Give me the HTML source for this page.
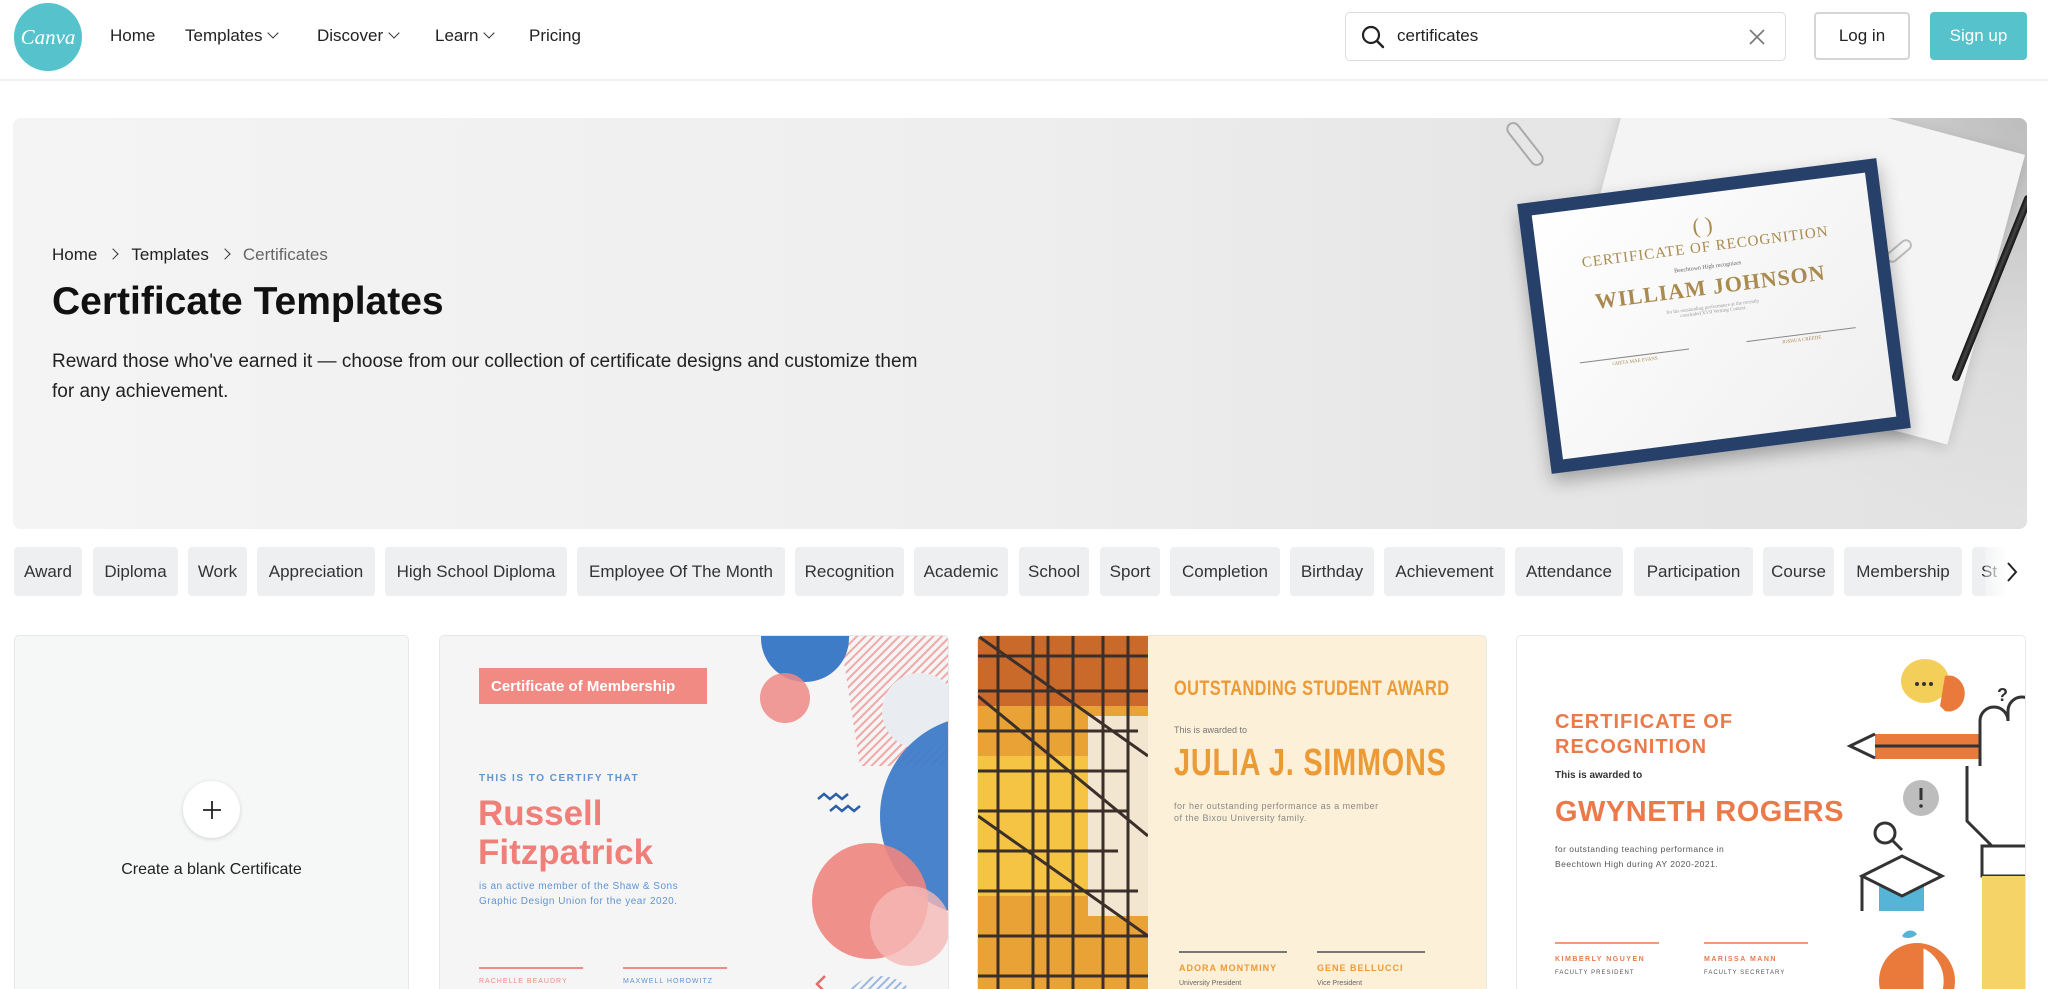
<!DOCTYPE html>
<html><head><meta charset="utf-8">
<style>
*{box-sizing:border-box;margin:0;padding:0}
body{width:2048px;height:989px;overflow:hidden;background:#fff;font-family:"Liberation Sans",sans-serif;color:#1a1a1a;position:relative}
.abs{position:absolute}
.nav a{position:absolute;top:26px;font-size:17px;color:#222;white-space:nowrap}
.chev{display:inline-block;width:8px;height:8px;border-right:1.6px solid #333;border-bottom:1.6px solid #333;transform:rotate(45deg);margin-left:7px;position:relative;top:-4px}
.chip{position:absolute;top:547px;height:49px;background:#eeeff1;border-radius:4px;font-size:17px;color:#333;display:flex;align-items:center;justify-content:center;white-space:nowrap;overflow:hidden}
.card{position:absolute;top:635px;height:354px;border-radius:5px 5px 0 0;overflow:hidden;border:1px solid #e8e8e8;border-bottom:none}
</style></head><body>

<div class="abs" style="left:14px;top:3px;width:68px;height:68px;border-radius:50%;background:#56c2cb;color:#fff;font-family:'Liberation Serif',serif;font-style:italic;font-size:21px;display:flex;align-items:center;justify-content:center">Canva</div>
<div class="nav">
<a style="left:110px">Home</a>
<a style="left:185px">Templates<span class="chev"></span></a>
<a style="left:317px">Discover<span class="chev"></span></a>
<a style="left:435px">Learn<span class="chev"></span></a>
<a style="left:529px">Pricing</a>
</div>
<div class="abs" style="left:1345px;top:12px;width:441px;height:49px;border:1px solid #dcdcdc;border-radius:5px"></div>
<svg class="abs" style="left:1360px;top:24px" width="26" height="26" viewBox="0 0 26 26"><circle cx="11" cy="11" r="8" fill="none" stroke="#222" stroke-width="2.2"/><path d="M17 17l6 6" stroke="#222" stroke-width="2.4" stroke-linecap="round"/></svg>
<div class="abs" style="left:1397px;top:26px;font-size:17px;color:#222">certificates</div>
<svg class="abs" style="left:1748px;top:28px" width="18" height="18" viewBox="0 0 18 18"><path d="M2 2l14 14M16 2L2 16" stroke="#777" stroke-width="1.6"/></svg>
<div class="abs" style="left:1814px;top:12px;width:96px;height:48px;border:2px solid #d6d6d6;border-radius:4px;font-size:17px;display:flex;align-items:center;justify-content:center;color:#222">Log in</div>
<div class="abs" style="left:1930px;top:12px;width:97px;height:48px;background:#56c2cb;border-radius:4px;font-size:17px;display:flex;align-items:center;justify-content:center;color:#fff">Sign up</div>
<div class="abs" style="left:0;top:79px;width:2048px;height:2px;background:#f2f2f2"></div>

<div class="abs" style="left:13px;top:118px;width:2014px;height:411px;border-radius:8px;overflow:hidden;background:linear-gradient(90deg,#f4f4f4 0%,#eeeeee 50%,#e6e6e6 75%,#e2e2e2 100%)">
  <div class="abs" style="right:0;top:0;width:420px;height:411px;background:radial-gradient(ellipse at 100% 0%,#bdbdbd 0%,rgba(210,210,210,0.4) 40%,rgba(230,230,230,0) 70%)"></div>
  <div class="abs" style="left:1580px;top:-20px;width:400px;height:300px;background:#f4f4f4;transform:rotate(15deg);box-shadow:0 4px 14px rgba(0,0,0,.15)"></div>
  <div class="abs" style="left:1505px;top:0px;width:14px;height:52px;border:2px solid #aaa;border-radius:8px;transform:rotate(-38deg)"></div>
  <div class="abs" style="left:1880px;top:118px;width:12px;height:30px;border:2px solid #bbb;border-radius:7px;transform:rotate(50deg)"></div>
  <div class="abs" style="left:1975px;top:70px;width:8px;height:200px;background:linear-gradient(90deg,#111,#444,#111);border-radius:4px;transform:rotate(22deg)"></div>
  <div class="abs" style="left:1520px;top:62px;width:362px;height:272px;background:#27406a;transform:rotate(-7.3deg);box-shadow:0 8px 18px rgba(0,0,0,.3);padding:13px">
    <div style="width:100%;height:100%;background:linear-gradient(135deg,#fff,#efefef);text-align:center;font-family:'Liberation Serif',serif;color:#a98a4f;padding-top:22px">
      <div style="font-size:22px;line-height:20px">( )</div>
      <div style="font-size:15px;letter-spacing:1px;margin-top:4px">CERTIFICATE OF RECOGNITION</div>
      <div style="font-size:6px;color:#666;margin-top:8px">Beechtown High recognizes</div>
      <div style="font-size:22px;font-weight:bold;margin-top:4px;letter-spacing:1px">WILLIAM JOHNSON</div>
      <div style="font-size:5px;color:#999;margin-top:5px">for his outstanding performance at the recently<br>concluded XVII Writing Contest.</div>
      <div style="display:flex;justify-content:space-around;margin-top:30px;font-size:5px">
        <div style="border-top:1px solid #888;width:110px;padding-top:3px">GRETA MAE EVANS</div>
        <div style="border-top:1px solid #888;width:110px;padding-top:3px">JOSHUA CREEDE</div>
      </div>
    </div>
  </div>
</div>
<div class="abs" style="left:52px;top:245px;font-size:17px;color:#222">Home<span class="chev" style="transform:rotate(-45deg);margin:0 14px 0 12px;top:-2px"></span>Templates<span class="chev" style="transform:rotate(-45deg);margin:0 14px 0 12px;top:-2px"></span><span style="color:#666">Certificates</span></div>
<div class="abs" style="left:52px;top:280px;font-size:39px;font-weight:bold;color:#111">Certificate Templates</div>
<div class="abs" style="left:52px;top:347px;width:875px;font-size:19px;line-height:30px;color:#222">Reward those who've earned it — choose from our collection of certificate designs and customize them for any achievement.</div>

<div class="chip" style="left:14px;width:68px">Award</div>
<div class="chip" style="left:93px;width:85px">Diploma</div>
<div class="chip" style="left:188px;width:59px">Work</div>
<div class="chip" style="left:257px;width:118px">Appreciation</div>
<div class="chip" style="left:385px;width:182px">High School Diploma</div>
<div class="chip" style="left:577px;width:208px">Employee Of The Month</div>
<div class="chip" style="left:795px;width:109px">Recognition</div>
<div class="chip" style="left:914px;width:94px">Academic</div>
<div class="chip" style="left:1019px;width:70px">School</div>
<div class="chip" style="left:1100px;width:60px">Sport</div>
<div class="chip" style="left:1170px;width:110px">Completion</div>
<div class="chip" style="left:1290px;width:84px">Birthday</div>
<div class="chip" style="left:1384px;width:121px">Achievement</div>
<div class="chip" style="left:1515px;width:108px">Attendance</div>
<div class="chip" style="left:1634px;width:119px">Participation</div>
<div class="chip" style="left:1763px;width:71px">Course</div>
<div class="chip" style="left:1844px;width:118px">Membership</div>
<div class="chip" style="left:1972px;width:60px;justify-content:flex-start;padding-left:9px">St</div>
<div class="abs" style="left:1985px;top:540px;width:63px;height:62px;background:linear-gradient(90deg,rgba(255,255,255,0.3),#fff 35%)"></div>
<svg class="abs" style="left:2004px;top:560px" width="16" height="24" viewBox="0 0 16 24"><path d="M4 3l8 9-8 9" fill="none" stroke="#222" stroke-width="2"/></svg>

<div class="card" style="left:14px;width:395px;background:#f6f7f7">
  <div class="abs" style="left:168px;top:145px;width:57px;height:57px;border-radius:50%;background:#fff;box-shadow:0 1px 4px rgba(0,0,0,.15)"></div>
  <svg class="abs" style="left:186px;top:163px" width="22" height="22"><path d="M11 2v18M2 11h18" stroke="#222" stroke-width="1.8"/></svg>
  <div class="abs" style="left:0;width:393px;top:225px;text-align:center;font-size:16px;color:#222">Create a blank Certificate</div>
</div>

<div class="card" style="left:439px;width:510px;background:#f5f5f5">
  <svg class="abs" style="left:0;top:0" width="510" height="360">
    <defs><pattern id="st" width="6" height="6" patternUnits="userSpaceOnUse" patternTransform="rotate(45)"><rect width="2" height="6" fill="#f0a8a8"/></pattern>
    <pattern id="st2" width="6" height="6" patternUnits="userSpaceOnUse" patternTransform="rotate(45)"><rect width="2" height="6" fill="#9cb8e0"/></pattern></defs>
    <path d="M400 0H510V130L420 130Z" fill="url(#st)"/>
    <circle cx="365" cy="2" r="44" fill="#3e7cc8"/>
    <circle cx="345" cy="62" r="25" fill="#ee8a86" opacity=".85"/>
    <circle cx="480" cy="75" r="38" fill="#e9ecf1"/>
    <circle cx="540" cy="180" r="100" fill="#3e7cc8" opacity=".95"/>
    <circle cx="430" cy="265" r="58" fill="#ef8580" opacity=".9"/>
    <circle cx="470" cy="290" r="40" fill="#f5b9b6" opacity=".8"/>
    <circle cx="440" cy="380" r="40" fill="url(#st2)"/>
    <path d="M378 163l6-5 6 5 6-5 6 5 6-5M390 175l6-5 6 5 6-5 6 5 6-5" fill="none" stroke="#2b5fa8" stroke-width="2.5"/>
    <path d="M385 340l-8 8 8 8-8 8" fill="none" stroke="#e86a6a" stroke-width="2.5"/>
  </svg>
  <div class="abs" style="left:39px;top:32px;width:228px;height:36px;background:#f08a82;color:#fff;font-weight:bold;font-size:15px;display:flex;align-items:center;padding-left:12px">Certificate of Membership</div>
  <div class="abs" style="left:39px;top:137px;font-size:10px;letter-spacing:1.5px;color:#5f94d2;font-weight:bold">THIS IS TO CERTIFY THAT</div>
  <div class="abs" style="left:38px;top:158px;font-size:35px;line-height:39px;font-weight:bold;color:#ef7f78">Russell<br>Fitzpatrick</div>
  <div class="abs" style="left:39px;top:243px;font-size:10px;line-height:15px;color:#5f94d2;letter-spacing:.5px">is an active member of the Shaw &amp; Sons<br>Graphic Design Union for the year 2020.</div>
  <div class="abs" style="left:39px;top:331px;width:104px;height:2px;background:#f08a82"></div>
  <div class="abs" style="left:183px;top:331px;width:104px;height:2px;background:#f08a82"></div>
  <div class="abs" style="left:39px;top:342px;font-size:7px;color:#f08a82;letter-spacing:1px">RACHELLE BEAUDRY</div>
  <div class="abs" style="left:183px;top:342px;font-size:7px;color:#5f94d2;letter-spacing:1px">MAXWELL HOROWITZ</div>
</div>

<div class="card" style="left:977px;width:510px;background:#fdf0d8">
  <svg class="abs" style="left:0;top:0" width="170" height="360">
    <rect width="170" height="360" fill="#e9a236"/>
    <rect x="0" y="120" width="110" height="140" fill="#f6c444"/>
    <rect x="110" y="80" width="60" height="200" fill="#f3e6d0"/>
    <rect x="0" y="0" width="170" height="70" fill="#c96a2a"/>
    <g stroke="#3a2f2a" stroke-width="3" fill="none">
      <path d="M0 20H170M0 55H170M0 95H160M0 135H150M0 175H150M0 215H140M0 255H160M0 300H170M0 340H170"/>
      <path d="M20 0V360M55 0V360M70 0V360M95 0V360M125 0V360M150 0V360"/>
      <path d="M0 0L170 120M0 60L170 200M0 180L170 300"/>
    </g>
  </svg>
  <div class="abs" style="left:196px;top:41px;font-size:21px;font-weight:bold;color:#eb9a35;transform:scaleX(.78);transform-origin:left;white-space:nowrap;letter-spacing:.5px">OUTSTANDING STUDENT AWARD</div>
  <div class="abs" style="left:196px;top:89px;font-size:9px;color:#777">This is awarded to</div>
  <div class="abs" style="left:196px;top:106px;font-size:38px;font-weight:bold;color:#eb9a35;transform:scaleX(.76);transform-origin:left;white-space:nowrap;letter-spacing:1px">JULIA J. SIMMONS</div>
  <div class="abs" style="left:196px;top:164px;font-size:9px;line-height:12px;color:#888;letter-spacing:.5px">for her outstanding performance as a member<br>of the Bixou University family.</div>
  <div class="abs" style="left:201px;top:315px;width:108px;height:2px;background:#777"></div>
  <div class="abs" style="left:339px;top:315px;width:108px;height:2px;background:#777"></div>
  <div class="abs" style="left:201px;top:327px;font-size:9px;font-weight:bold;color:#eb9a35;letter-spacing:1px">ADORA MONTMINY</div>
  <div class="abs" style="left:339px;top:327px;font-size:9px;font-weight:bold;color:#eb9a35;letter-spacing:1px">GENE BELLUCCI</div>
  <div class="abs" style="left:201px;top:344px;font-size:7px;color:#666">University President</div>
  <div class="abs" style="left:339px;top:344px;font-size:7px;color:#666">Vice President</div>
</div>

<div class="card" style="left:1516px;width:510px;background:#fff">
  <svg class="abs" style="left:0;top:0" width="510" height="360">
    <ellipse cx="408" cy="45" rx="24" ry="22" fill="#f3cf5a"/>
    <path d="M428 40a16 18 0 1 1 0 35l-5-5z" fill="#ea7a3c"/>
    <circle cx="400" cy="48" r="2" fill="#333"/><circle cx="407" cy="48" r="2" fill="#333"/><circle cx="414" cy="48" r="2" fill="#333"/>
    <text x="480" y="65" font-family="Liberation Sans" font-weight="bold" font-size="18" fill="#333">?</text>
    <path d="M358 98h105v25H358z" fill="#ea7a3c"/>
    <path d="M358 98l-25 12 25 12" fill="none" stroke="#333" stroke-width="3"/>
    <path d="M358 110h105" stroke="#333" stroke-width="3"/>
    <path d="M463 130V85a14 14 0 0 1 28 0V75a14 14 0 0 1 28 0" fill="none" stroke="#333" stroke-width="3"/>
    <path d="M450 130v55l25 25" fill="none" stroke="#333" stroke-width="3"/>
    <circle cx="404" cy="162" r="18" fill="#bdbdbd"/><path d="M404 152v12" stroke="#333" stroke-width="3"/><circle cx="404" cy="170" r="1.8" fill="#333"/>
    <circle cx="368" cy="197" r="10" fill="none" stroke="#333" stroke-width="3"/><path d="M375 204l10 10" stroke="#333" stroke-width="3"/>
    <rect x="362" y="240" width="45" height="35" fill="#56b4d6"/>
    <path d="M345 240l40-20 40 20-40 20z" fill="#fff" stroke="#333" stroke-width="3"/>
    <path d="M345 240v35" stroke="#333" stroke-width="3"/>
    <rect x="465" y="210" width="50" height="30" fill="#fff" stroke="#333" stroke-width="3"/>
    <rect x="465" y="240" width="50" height="130" fill="#f5d366"/>
    <circle cx="400" cy="345" r="38" fill="#ea7a3c"/>
    <path d="M405 310a38 38 0 0 1 0 70z" fill="#fff" stroke="#ea7a3c" stroke-width="3"/>
    <path d="M385 300c5-8 12-6 15-2c-5 5-12 5-15 2z" fill="#56b4d6"/>
  </svg>
  <div class="abs" style="left:38px;top:74px;font-size:20px;line-height:25px;font-weight:bold;color:#ea7a4a;letter-spacing:1px">CERTIFICATE OF<br>RECOGNITION</div>
  <div class="abs" style="left:38px;top:134px;font-size:10px;font-weight:bold;color:#333">This is awarded to</div>
  <div class="abs" style="left:38px;top:160px;font-size:29px;font-weight:bold;color:#ea7a4a;letter-spacing:.5px">GWYNETH ROGERS</div>
  <div class="abs" style="left:38px;top:206px;font-size:8.5px;line-height:15px;color:#555;letter-spacing:.5px">for outstanding teaching performance in<br>Beechtown High during AY 2020-2021.</div>
  <div class="abs" style="left:38px;top:306px;width:104px;height:2px;background:#ef9a78"></div>
  <div class="abs" style="left:187px;top:306px;width:104px;height:2px;background:#ef9a78"></div>
  <div class="abs" style="left:38px;top:320px;font-size:7px;font-weight:bold;color:#ea7a4a;letter-spacing:1.5px">KIMBERLY NGUYEN</div>
  <div class="abs" style="left:187px;top:320px;font-size:7px;font-weight:bold;color:#ea7a4a;letter-spacing:1.5px">MARISSA MANN</div>
  <div class="abs" style="left:38px;top:334px;font-size:6px;color:#555;letter-spacing:1px">FACULTY PRESIDENT</div>
  <div class="abs" style="left:187px;top:334px;font-size:6px;color:#555;letter-spacing:1px">FACULTY SECRETARY</div>
</div>
</body></html>
